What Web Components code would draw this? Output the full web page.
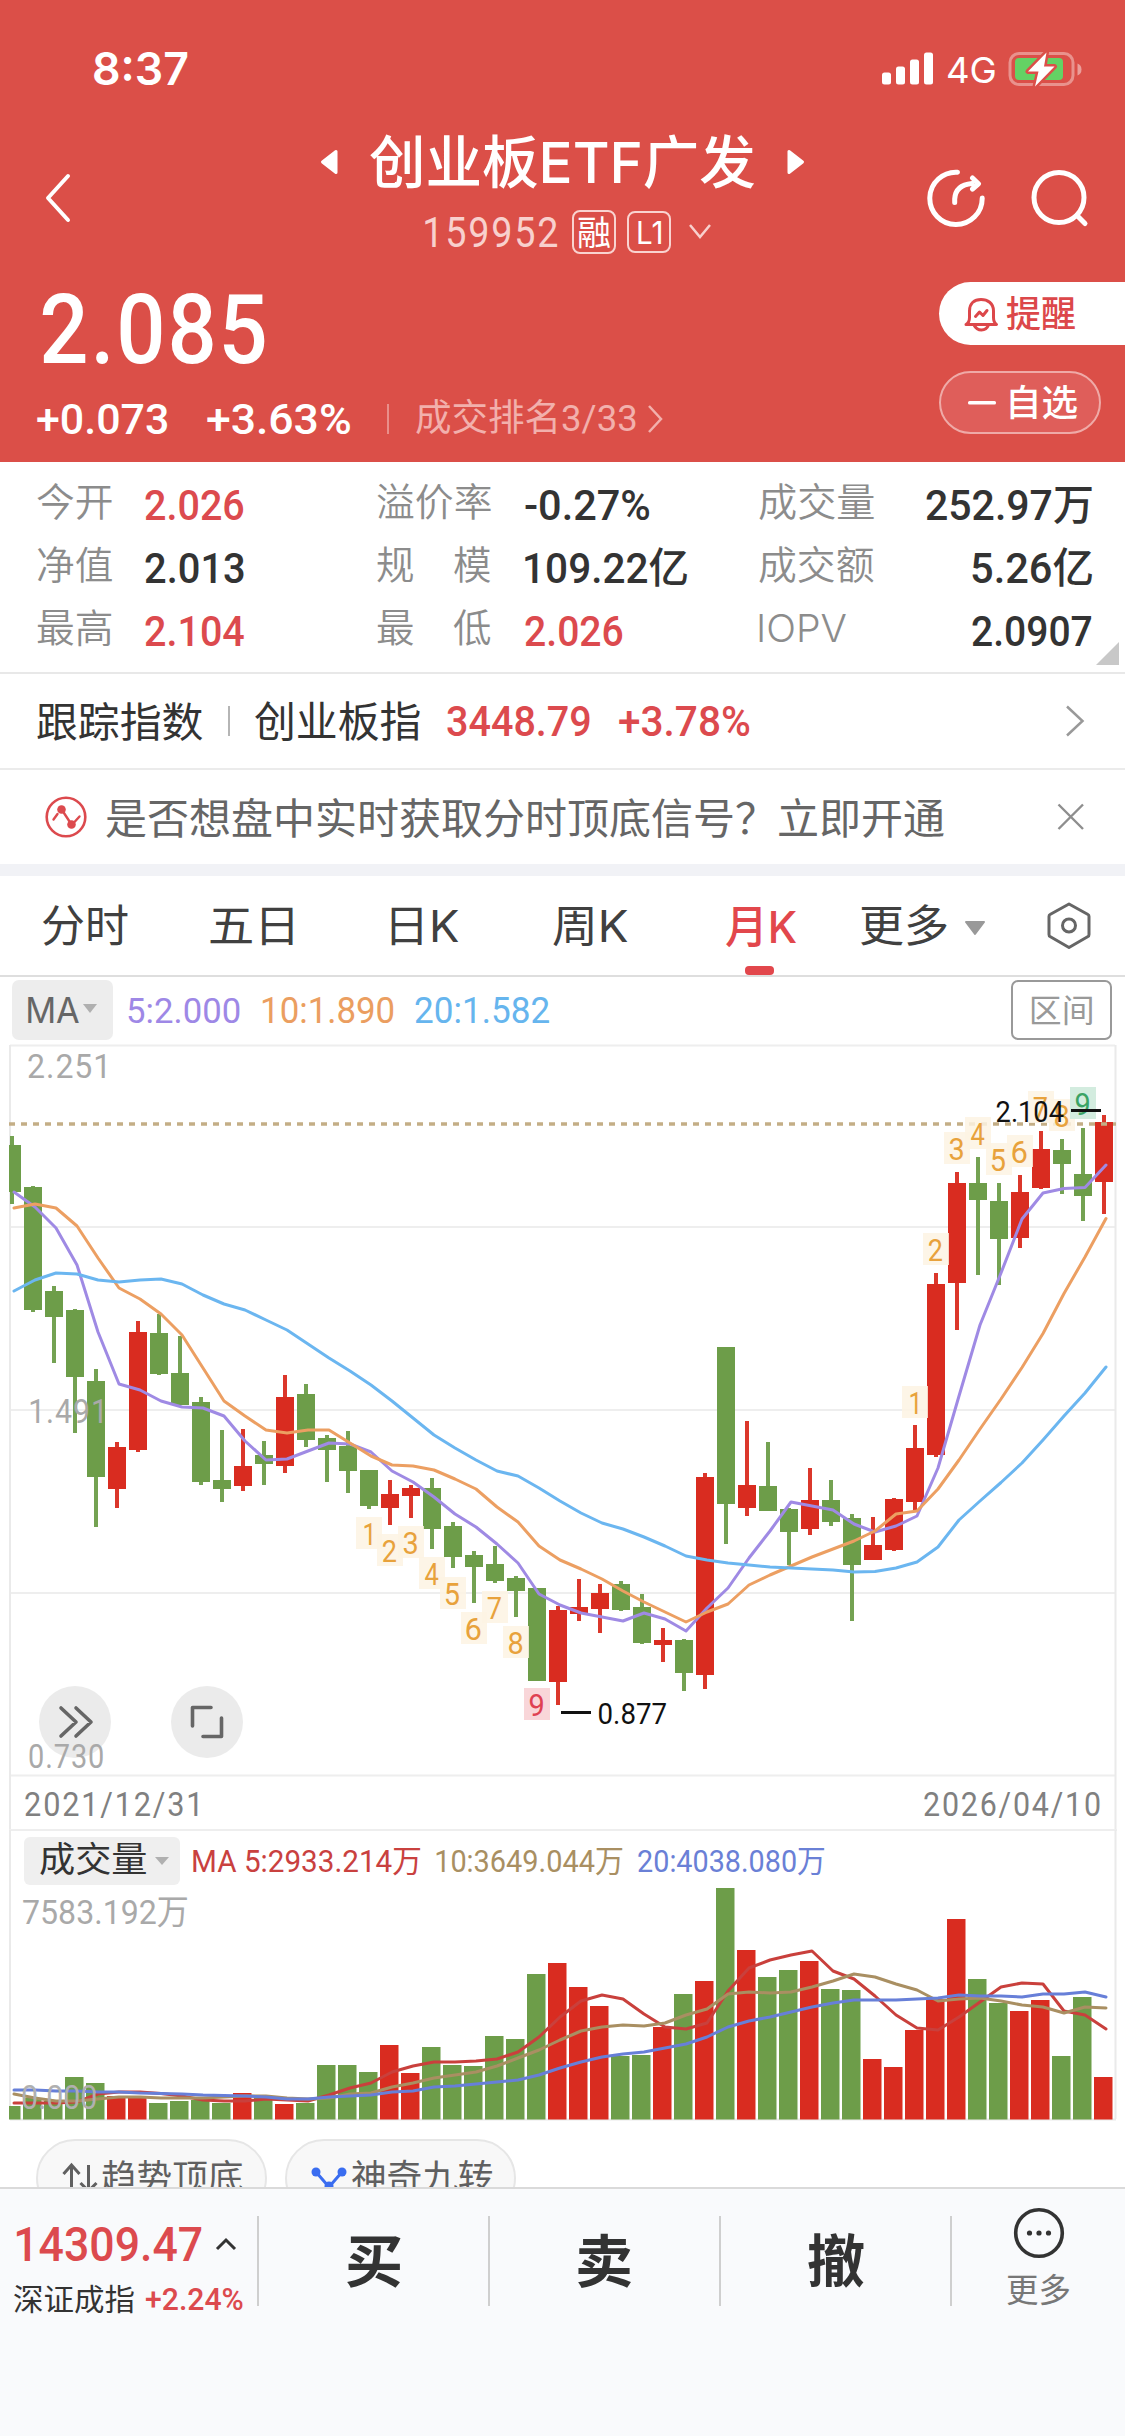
<!DOCTYPE html>
<html lang="zh-CN">
<head>
<meta charset="utf-8">
<title>创业板ETF广发</title>
<style>
html,body{margin:0;padding:0}
body{width:1125px;height:2436px;overflow:hidden;background:#fff;font-family:Roboto,"Noto Sans CJK SC",sans-serif;color:#333}
</style>
</head>
<body>
<fund-page></fund-page>
<script>
const NUM = 'Roboto, "Noto Sans CJK SC", sans-serif';
const UI = 'Inter, "Noto Sans CJK SC", sans-serif';
const pen = document.createElement('canvas').getContext('2d');

// Returns an SVG <text> whose ink starts at x and spans w pixels.
function fitted(str, o) {
  const fam = o.ui ? UI : NUM, wt = o.weight || 400;
  pen.font = `${wt} ${o.size}px ${fam}`;
  pen.letterSpacing = (o.ls || 0) + 'px';
  const m = pen.measureText(str);
  const left = -m.actualBoundingBoxLeft, ink = m.actualBoundingBoxRight - left;
  const s = o.w / ink;
  return `<text xml:space="preserve" transform="translate(${(o.x - left * s).toFixed(2)} ${o.y}) scale(${s.toFixed(4)} 1)" style="font:${wt} ${o.size}px ${fam.replace(/"/g, "'")};letter-spacing:${o.ls || 0}px;white-space:pre" fill="${o.fill || 'currentColor'}">${str}</text>`;
}

function define(name, html, after) {
  customElements.define(name, class extends HTMLElement {
    connectedCallback() {
      if (this.shadowRoot) return;
      const root = this.attachShadow({ mode: 'open' });
      const t = document.createElement('template');
      t.innerHTML = typeof html === 'function' ? html(this) : html;
      root.append(t.content.cloneNode(true));
      if (after) after(this, root);
    }
  });
}

define('ink-text', el => {
  const a = n => el.getAttribute(n);
  const str = a('t'), w = +a('w'), size = +a('s');
  const cjk = /^[\u3400-\u9fff]/.test(str);
  const H = Math.round(size * 1.2);
  const y = H / 2 + size * (cjk ? .375 : .357);
  return `<style>:host{display:block;flex:none;width:${w}px;height:${H}px}svg{display:block;overflow:visible}</style>
  <svg width="${w}" height="${H}">${fitted(str, { x: 0, y, w, size, weight: a('b') || 400, ui: el.hasAttribute('ui'), ls: +(a('ls') || 0) })}</svg>`;
});

define('status-bar', `<style>
:host{display:flex;align-items:center;height:138px;padding:0 43px 0 94px;color:#fff}
.r{margin-left:auto;display:flex;align-items:center}
svg{display:block}
</style>
<ink-text t="8:37" w="94" s="45" b="600" ui></ink-text>
<div class="r">
<svg width="52" height="34" viewBox="0 0 52 34" fill="#fff"><rect x="0" y="20.5" width="9" height="12" rx="2.5"/><rect x="14" y="14.5" width="9" height="18" rx="2.5"/><rect x="28" y="7.500" width="9" height="25" rx="2.500"/><rect x="42" y=".5" width="9" height="32" rx="2.500"/></svg>
<ink-text t="4G" w="47" s="36" ui style="margin:2px 0 0 14px"></ink-text>
<svg width="74" height="38" viewBox="0 0 74 38" style="margin-left:13px">
<rect x="2" y="3.500" width="63" height="31" rx="9" fill="none" stroke="#fff" stroke-opacity=".38" stroke-width="3"/>
<path d="M69.500 13.500q4 1.500 4 6t-4 6z" fill="#fff" fill-opacity=".45"/>
<rect x="7" y="8" width="48" height="22" rx="4" fill="#64d264"/>
<path d="M38.500 2.500L20 21.500h10.500L27 36.500L46.500 16.500H36z" fill="#fff" stroke="#db4f48" stroke-width="5" stroke-linejoin="round"/>
<path d="M38.500 2.500L20 21.500h10.500L27 36.500L46.500 16.500H36z" fill="#fff"/></svg>
</div>`);

define('fund-nav', `<style>
:host{display:flex;height:120px;color:#fff;justify-content:space-between}
svg{display:block;flex:none}
.side{display:flex;align-items:center;width:250px;box-sizing:border-box}
.mid{display:flex;flex-direction:column;align-items:center}
.title{height:47px;display:flex;align-items:center;gap:32px}
.code{height:46px;margin-top:24px;display:flex;align-items:center;margin-left:13px}
.tag{border:2px solid #f9d3d0;border-radius:8px;display:flex;align-items:center;justify-content:center;box-sizing:border-box}
</style>
<div class="side" style="padding-left:44px"><svg width="28" height="52"><path d="M24 4L4 26L24 48" fill="none" stroke="#fff" stroke-width="4" stroke-linecap="round" stroke-linejoin="round"/></svg></div>
<div class="mid">
<div class="title"><svg width="18" height="26"><path d="M16 2.500v21L2.500 13z" fill="#fff" stroke="#fff" stroke-width="3" stroke-linejoin="round"/></svg>
<ink-text t="创业板ETF广发" w="385" s="57" b="500" ui></ink-text>
<svg width="18" height="26"><path d="M2 2.500v21L15.500 13z" fill="#fff" stroke="#fff" stroke-width="3" stroke-linejoin="round"/></svg></div>
<div class="code"><ink-text t="159952" w="133" s="42" ls="2" style="color:#f8d0cd"></ink-text>
<div class="tag" style="width:44px;height:44px;margin-left:14px"><ink-text t="融" w="32" s="34"></ink-text></div>
<div class="tag" style="width:44px;height:42px;margin-left:11px"><ink-text t="L1" w="23" s="31" ui></ink-text></div>
<svg width="26" height="20" style="margin-left:16px"><path d="M3 3L13 15L23 3" fill="none" stroke="#f8d0cd" stroke-width="2.500"/></svg></div>
</div>
<div class="side" style="padding-left:52px">
<svg width="60" height="60" fill="none" stroke="#fff" stroke-width="5" stroke-linecap="round" stroke-linejoin="round"><path d="M30.500 4.200A26.200 26.200 0 1 0 55.200 30M27.700 34.500V31Q28.500 17 45 15.500M45.500 10L51.500 15.800L45.500 21"/></svg>
<svg width="62" height="62" style="margin:2px 0 0 41px" fill="none" stroke="#fff" stroke-width="5" stroke-linecap="round"><circle cx="31" cy="29.500" r="25"/><path d="M49 47.500L57 55.500"/></svg>
</div>`);

define('price-panel', `<style>
:host{display:flex;height:204px;color:#fff;justify-content:space-between}
svg{display:block;flex:none}
.l{padding-top:24px}
.price{height:95px;display:flex;align-items:center;padding-left:42px}
.chg{height:83px;display:flex;align-items:center;padding-left:37px}
.rank{color:#f2b0ac;display:flex;align-items:center}
.bar{width:2px;height:30px;background:#e98f8a;margin:0 27px 0 37px}
.r{width:186px;padding-top:24px}
.pill{height:63px;box-sizing:border-box;display:flex;align-items:center}
.remind{background:#fff;color:#dc474a;border-radius:32px 0 0 32px;padding-left:24px}
.self{width:162px;margin-top:26px;border:2px solid #efaaa7;border-radius:32px;background:#df5e5a;padding-left:27px}
</style>
<div class="l">
<div class="price"><ink-text t="2.085" w="223" s="97" b="500" ls="2" style="margin-top:-3px"></ink-text></div>
<div class="chg"><ink-text t="+0.073" w="131" s="43" b="500"></ink-text><ink-text t="+3.63%" w="143" s="43" b="500" style="margin-left:39px"></ink-text>
<span class="bar"></span><span class="rank"><ink-text t="成交排名3/33" w="220" s="37" style="margin-top:-3px"></ink-text><svg width="18" height="30" style="margin-left:10px"><path d="M3 2L15 15L3 28" fill="none" stroke="#f2b0ac" stroke-width="2.500"/></svg></span></div>
</div>
<div class="r">
<div class="pill remind"><svg width="36" height="38" fill="none" stroke="#dc474a" stroke-width="3" stroke-linejoin="round" stroke-linecap="round"><path d="M3 29.500q3.500-2 3.500-7V16C6.500 8 11.500 4.500 18 4.500S30.500 8 30.500 16v6.500q0 5 3 7zM11 30q2.500 5 7.500 5t7-5"/><path d="M12.500 21.500l4-4.500l3.500 3.500l4-5"/></svg><ink-text t="提醒" w="69" s="36" b="500" style="margin-left:7px"></ink-text></div>
<div class="pill self"><svg width="28" height="4"><rect width="28" height="3.500" rx="1.500" fill="#fff"/></svg><ink-text t="自选" w="67" s="36" b="500" style="margin-left:14px"></ink-text></div>
</div>`);

define('fund-header', `<style>:host{display:block;background:#db4f48;height:462px}</style>
<status-bar></status-bar><fund-nav></fund-nav><price-panel></price-panel>`);

define('stat-cell', el => {
  const a = n => el.getAttribute(n);
  return `<style>:host{display:flex;align-items:center;height:63px}
  .k{color:#8c8c8c;width:${a('gap')}px;flex:none;margin-top:-5px}.v{color:${el.hasAttribute('up') ? '#dc4a4e' : '#333'};${el.hasAttribute('end') ? 'margin-left:auto' : ''}}</style>
  <div class="k"><ink-text t="${a('k')}" w="${a('kw')}" s="${a('ks') || 38.5}" ${a('k') === 'IOPV' ? 'ui' : ''} b="${a('k') === 'IOPV' ? 300 : 350}"></ink-text></div><div class="v"><ink-text t="${a('v')}" w="${a('vw')}" s="42" b="500"></ink-text></div>`;
});

define('stat-grid', `<style>
:host{display:grid;grid-template-columns:340px 382px 333px;height:210px;box-sizing:border-box;padding:11px 32px 0 37px;border-bottom:2px solid #e8e8e8;position:relative;grid-auto-rows:63px}
.fold{position:absolute;right:6px;bottom:7px;display:block}
</style>
<stat-cell gap="108" k="今开" kw="75" v="2.026" vw="99" up></stat-cell><stat-cell gap="148" k="溢价率" kw="114" v="-0.27%" vw="125"></stat-cell><stat-cell gap="113" k="成交量" kw="115" v="252.97万" vw="166" end></stat-cell>
<stat-cell gap="108" k="净值" kw="75" v="2.013" vw="99"></stat-cell><stat-cell gap="148" k="规　模" kw="114" v="109.22亿" vw="162"></stat-cell><stat-cell gap="113" k="成交额" kw="115" v="5.26亿" vw="120" end></stat-cell>
<stat-cell gap="108" k="最高" kw="75" v="2.104" vw="99" up></stat-cell><stat-cell gap="148" k="最　低" kw="114" v="2.026" vw="98" up></stat-cell><stat-cell gap="113" k="IOPV" kw="87" ks="38.5" v="2.0907" vw="120" end></stat-cell>
<svg class="fold" width="23" height="23"><path d="M23 0V23H0z" fill="#c8c8c8"/></svg>`);

define('index-row', `<style>
:host{display:flex;align-items:center;height:98px;box-sizing:border-box;padding:0 40px 0 37px;border-bottom:2px solid #ebebeb}
.bar{width:2px;height:30px;background:#b5b5b5;margin:0 25px 0 25px}
.up{color:#dc4a4e;display:flex}svg{margin-left:auto;display:block}
</style>
<ink-text t="跟踪指数" w="166" s="41.5"></ink-text><span class="bar"></span><ink-text t="创业板指" w="165" s="41.5"></ink-text>
<span class="up" style="margin-left:27px"><ink-text t="3448.79" w="143" s="42" b="500"></ink-text><ink-text t="+3.78%" w="131" s="42" b="500" style="margin-left:29px"></ink-text></span>
<svg width="20" height="32"><path d="M2 1.500L17.500 16L2 30.500" fill="none" stroke="#999" stroke-width="2.500"/></svg>`);

define('signal-notice', `<style>
:host{display:flex;align-items:center;height:105px;box-sizing:border-box;padding:0 40px 0 45px;color:#666;border-bottom:12px solid #f1f2f6}
svg{display:block;flex:none}
</style>
<svg width="42" height="42"><circle cx="21" cy="21" r="19.300" fill="none" stroke="#dc4a4e" stroke-width="2.600"/><path d="M8.500 23.500L12.500 18M17 14L26.500 28.500M29.500 26L34.500 20.500" fill="none" stroke="#dc4a4e" stroke-width="2.400" stroke-linecap="round"/><circle cx="16.500" cy="13.500" r="4.300" fill="#dc4a4e"/><circle cx="26.500" cy="28.500" r="4.300" fill="#dc4a4e"/></svg>
<ink-text t="是否想盘中实时获取分时顶底信号？立即开通" w="838" s="42" style="margin:1px 0 0 19px"></ink-text>
<svg width="28" height="28" style="margin-left:auto"><path d="M1.500 1.500L26 26M26 1.500L1.500 26" stroke="#8e8e8e" stroke-width="2.400"/></svg>`);

define('period-tabs', `<style>
:host{display:flex;align-items:center;height:101px;box-sizing:border-box;padding:0 0 0 42px;border-bottom:2px solid #dedede;color:#404040}
svg{display:block;flex:none}
.on{color:#e2474c;display:flex;flex-direction:column;align-items:center;height:99px;box-sizing:border-box;padding-top:24px}
.on i{width:29px;height:9px;border-radius:4px;background:#e2474c;margin-top:auto;margin-left:-4px}
</style>
<ink-text t="分时" w="86" s="44"></ink-text><ink-text t="五日" w="83" s="44" style="margin-left:82px"></ink-text><ink-text t="日K" w="68" s="44" ui style="margin-left:98px"></ink-text><ink-text t="周K" w="75" s="44" ui style="margin-left:94px"></ink-text>
<div class="on" style="margin-left:98px"><ink-text t="月K" w="71" s="44" b="500" ui></ink-text><i></i></div>
<ink-text t="更多" w="86" s="44" style="margin-left:64px"></ink-text><svg width="22" height="16" style="margin-left:17px;margin-top:4px"><path d="M2 2h18l-9 12z" fill="#999" stroke="#999" stroke-width="2" stroke-linejoin="round"/></svg>
<svg width="46" height="50" style="margin-left:60px" fill="none" stroke="#666" stroke-width="3"><path d="M23 3L42 13.500Q43 14 43 15.500V33.500Q43 35 42 35.500L23 46.500L4 35.500Q3 35 3 33.500V15.500Q3 14 4 13.500z" stroke-linejoin="round"/><circle cx="23" cy="24.500" r="6.500"/></svg>`);

define('ma-legend', `<style>
:host{display:flex;align-items:center;height:68px;padding:0 13px 2px 12px;box-sizing:border-box}
.b{width:101px;height:60px;border-radius:7px;background:#ededed;display:flex;align-items:center;box-sizing:border-box;padding-left:16px;color:#666}
.z{margin-left:auto;width:101px;height:60px;border:2px solid #999;border-radius:7px;box-sizing:border-box;display:flex;align-items:center;justify-content:center;color:#999}
</style>
<div class="b"><ink-text t="MA" w="51" s="36" ui></ink-text><svg width="14" height="10" style="margin:-3px 0 0 4px"><path d="M0 0h14L7 9z" fill="#b0b0b0"/></svg></div>
<ink-text t="5:2.000" w="112" s="36" style="margin-left:15px;color:#9e88e6"></ink-text><ink-text t="10:1.890" w="131" s="36" style="margin-left:23px;color:#eb9e60"></ink-text><ink-text t="20:1.582" w="134" s="36" style="margin-left:21px;color:#66b5ee"></ink-text>
<div class="z"><ink-text t="区间" w="60" s="31.500"></ink-text></div>`);

// high, body top, body bottom, low (canvas y), r = rising month
const K = `1136 1145 1192 1204 g|1186 1187 1310 1312 g|1286 1291 1317 1363 g|1309 1310 1377 1433 g|1369 1381 1477 1527 g|1442 1447 1489 1508 r|1321 1332 1450 1452 r|1314 1333 1374 1375 g|1336 1373 1405 1405 g|1397 1402 1482 1485 g|1430 1480 1489 1502 g|1429 1466 1486 1491 r|1441 1455 1464 1485 g|1375 1397 1466 1473 r|1384 1394 1440 1447 g|1435 1438 1450 1482 g|1431 1446 1471 1493 g|1470 1470 1506 1509 g|1480 1494 1508 1525 r|1485 1488 1496 1518 r|1478 1488 1529 1549 g|1522 1526 1557 1568 g|1551 1555 1567 1603 g|1546 1564 1581 1583 g|1576 1578 1591 1617 g|1588 1588 1681 1681 g|1606 1610 1682 1705 r|1579 1607 1614 1621 r|1584 1593 1609 1633 r|1581 1584 1610 1611 g|1594 1607 1643 1644 g|1628 1640 1645 1662 r|1639 1640 1673 1691 g|1473 1477 1675 1689 r|1347 1347 1504 1544 g|1421 1485 1508 1516 r|1442 1486 1511 1511 g|1508 1509 1532 1565 g|1468 1500 1529 1535 r|1480 1500 1522 1526 g|1514 1518 1565 1621 g|1517 1545 1560 1560 r|1498 1499 1550 1551 r|1425 1448 1502 1510 r|1273 1284 1455 1457 r|1172 1183 1283 1330 r|1157 1183 1200 1275 g|1183 1201 1239 1285 g|1175 1192 1238 1248 r|1131 1149 1188 1189 r|1139 1150 1164 1194 g|1128 1174 1196 1221 g|1115 1122 1182 1214 r`.split('|').map(s => s.split(' ').map((v, i) => i < 4 ? +v : v));
const M5 = [1192,1207,1228,1265,1332,1384,1390,1401,1407,1408,1416,1441,1460,1459,1451,1443,1444,1452,1471,1482,1497,1514,1527,1544,1563,1594,1605,1613,1617,1621,1613,1619,1631,1608,1588,1558,1531,1502,1506,1510,1524,1532,1526,1516,1468,1396,1325,1273,1219,1193,1188.5,1187.5,1165];
const M10 = [1208,1204,1208,1226,1258,1288,1299,1314,1335,1368,1401,1416,1430,1433,1430,1430,1443,1456,1465,1466,1470,1479,1489,1507,1522,1546,1560,1569,1579,1591,1602,1612,1622,1612,1604,1585,1575,1566,1557,1549,1541,1531,1514,1511,1489,1460,1429,1399,1367.5,1333.5,1293.5,1257,1218.5];
const M20 = [1291,1280,1273,1274,1280,1282,1280,1279,1284,1295,1304,1310,1320,1330,1344,1358,1371,1385,1401,1418,1435,1448,1460,1471,1476,1488,1501,1513,1523,1529,1537,1546,1556,1560,1563,1565,1567,1568,1569,1570,1572,1571.5,1568,1562,1547,1520,1501,1482.5,1463,1440,1416,1393,1367];
const V = [2106,2098,2101,2077,2083,2096,2097,2103,2101,2100,2103,2093,2096,2104,2103,2065,2065,2072,2045,2073,2047,2065,2066,2036,2039,1974,1963,1987,2006,2056,2055,2027,1994,1981,1888,1950,1977,1970,1961,1989,1990,2059,2067,2030,1999,1919,1979,2003,2011,2000,2056,1997,2077];
const V5 = [2103,2103,2103,2102,2094,2092,2092,2093.5,2096,2100,2101,2101,2099,2100,2101,2095,2088,2083,2072,2066,2062,2062,2061,2059,2052,2037,2017,2001,1995,1999,2014,2027,2029,2023,1991,1968,1960,1955,1951,1971,1979,1996,2015,2028,2030,2017,2002,1987,1983,1984,2011,2015,2029];
const V10 = [2094,2098,2101,2101,2099,2097,2097,2098,2098,2098,2097,2096,2096,2098,2099,2098,2094,2093,2087,2083,2078,2075,2072,2066,2058,2050,2040,2031,2027,2025,2026,2023,2015,2009,1994,1992,1993,1992,1987,1981,1974,1977,1984,1990,2001,1999,1998,2001,2005,2007,2013,2007,2008];
const V20 = [2090,2090,2091,2091,2092,2092,2093,2093.5,2094,2095,2095.5,2096,2097,2099,2099,2097,2096,2095,2092,2091,2087,2086,2084,2082,2080,2075,2068,2062,2057,2054,2052,2048,2044,2037,2027,2021,2017,2012,2007,2003,2000,2000,2000,1999,1998,1995,1996,1996,1997,1994,1994,1992,1997];
const X = i => 12 + 21 * i, RED = '#d92c20', GREEN = '#6d9d49';
const line = (a, c, w = 3) => `<polyline fill="none" stroke="${c}" stroke-width="${w}" stroke-linejoin="round" stroke-linecap="round" points="${a.map((y, i) => `${X(i) + 2},${y}`).join(' ')}"/>`;

define('kline-chart', () => {
  let s = '';
  for (const y of [1045.5, 1227, 1410, 1593, 1775.500]) s += `<path d="M10 ${y}H1115" stroke="#eee" stroke-width="2"/>`;
  s += '<path d="M10 1045V1830M1115.500 1045V1830" stroke="#eaeaea" stroke-width="2"/>';
  s += '<circle cx="75" cy="1722" r="36" fill="#ebebeb"/><circle cx="207" cy="1722" r="36" fill="#ebebeb"/><g fill="none" stroke="#666" stroke-width="3.600" stroke-linecap="round" stroke-linejoin="round"><path d="M61 1708L76 1722L61 1736M76 1708L91 1722L76 1736M192.500 1726V1707.500H211M221.500 1718V1736.500H203"/></g>';
  K.forEach(([h, t, b, l, c], i) => {
    const f = c === 'r' ? RED : GREEN, x0 = Math.max(9, X(i) - 9);
    s += `<rect x="${X(i) - 2}" y="${h}" width="4" height="${l - h}" fill="${f}" fill-opacity=".95"/><rect x="${x0}" y="${t}" width="${X(i) + 9 - x0}" height="${b - t}" fill="${f}"/>`;
  });
  s += '<path d="M9 1124H1116" stroke="#c4ae86" stroke-width="3.500" stroke-dasharray="6 6"/>';
  s += line(M5, '#9f8ae4') + line(M10, '#ec9f62') + line(M20, '#6bb6f0');
  const tag = (n, i, y, c = '#e8a23c', bg = '#fdf3e3', op = .85) => `<rect x="${X(i) - 13}" y="${y - 17}" width="26" height="32" fill="${bg}" fill-opacity="${op}"/>` + fitted(n, { x: X(i) - (n === '1' ? 5 : 7.500), y: y + 10.500, w: n === '1' ? 8 : 14, size: 31, fill: c });
  [[1, 17, 1534], [2, 18, 1551], [3, 19, 1543], [4, 20, 1574], [5, 21, 1594], [6, 22, 1629], [7, 23, 1608], [8, 24, 1643],
   [1, 43, 1403], [2, 44, 1250], [3, 45, 1149], [4, 46, 1134], [5, 47, 1160], [6, 48, 1152], [7, 49, 1108], [8, 50, 1116]].forEach(([n, i, y]) => s += tag(String(n), i, y));
  s += tag('9', 25, 1705, '#df4152', '#f9d6d9', 1) + tag('9', 51, 1104, '#3ba364', '#d3ecdf', 1);
  s += '<path d="M561 1712.500H591M1071 1110.500H1101" stroke="#111" stroke-width="3"/>';
  s += fitted('0.877', { x: 598.500, y: 1724, w: 68, size: 29.5, fill: '#111' }) + fitted('2.104', { x: 996.500, y: 1122, w: 67, size: 29.5, fill: '#111' });
  const g = '#a9a9a9';
  s += fitted('2.251', { x: 28, y: 1078, w: 77, size: 33, fill: g, ls: 1 }) + fitted('1.491', { x: 30, y: 1423, w: 72, size: 33, fill: g, ls: 1 }) + fitted('0.730', { x: 29, y: 1768, w: 74, size: 33, fill: g, ls: 1 });
  return `<style>:host{display:block;height:731px}svg{display:block;overflow:visible}</style><svg width="1125" height="731" viewBox="0 1045 1125 731">${s}</svg>`;
});

define('date-axis', `<style>:host{display:flex;justify-content:space-between;align-items:center;height:55px;box-sizing:border-box;margin:0 8.500px 0 9px;padding:2px 17px 0 16px;border-bottom:2px solid #eee;color:#808080}</style>
<ink-text t="2021/12/31" w="173" s="34" ls="2"></ink-text><ink-text t="2026/04/10" w="176" s="34" ls="2"></ink-text>`);

define('volume-legend', `<style>:host{display:flex;align-items:center;height:59px;padding:0 0 0 24px;box-sizing:border-box}
.b{width:156px;height:48px;border-radius:6px;background:#efefef;display:flex;align-items:center;box-sizing:border-box;padding-left:16px}</style>
<div class="b"><ink-text t="成交量" w="106" s="35.500" style="margin-top:-4px"></ink-text><svg width="14" height="9" style="margin:2px 0 0 9px"><path d="M0 0h14L7 8z" fill="#b0b0b0"/></svg></div>
<ink-text t="MA 5:2933.214万" w="228" s="31" style="margin-left:13px;color:#c9413f"></ink-text><ink-text t="10:3649.044万" w="187" s="31" style="margin-left:15px;color:#a98f62"></ink-text><ink-text t="20:4038.080万" w="187" s="31" style="margin-left:15px;color:#6a80d6"></ink-text>`);

define('volume-chart', () => {
  let s = '<path d="M10 1830V2119M1115.500 1830V2119M10 2119.500H1116" stroke="#eaeaea" stroke-width="2" fill="none"/>';
  V.forEach((y, i) => { const x0 = Math.max(9, X(i) - 10); s += `<rect x="${x0}" y="${y}" width="${X(i) + 8.500 - x0}" height="${2119.500 - y}" fill="${K[i][4] === 'r' ? RED : GREEN}"/>`; });
  s += line(V5, '#c9403c') + line(V10, '#a98f62') + line(V20, '#677fd8');
  s += fitted('7583.192万', { x: 23, y: 1924, w: 164, size: 34, fill: '#a9a9a9' }) + fitted('0.000', { x: 22, y: 2109, w: 74, size: 33, fill: '#b0b0b0' });
  return `<style>:host{display:block;height:230px}svg{display:block;overflow:visible}</style><svg width="1125" height="230" viewBox="0 1890 1125 230">${s}</svg>`;
});

define('tool-chip', el => `<style>:host{display:flex;align-items:center;width:${el.getAttribute('w')}px;height:78px;box-sizing:border-box;border:2px solid #e6e6e6;border-radius:39px;background:#f8f8f8;color:#606060;padding-left:24px}</style><slot></slot><ink-text t="${el.getAttribute('t')}" w="141" s="35.500" style="margin:-3px 0 0 ${el.getAttribute('g')}px"></ink-text>`);

define('chip-row', `<style>:host{display:flex;gap:18px;height:67px;overflow:hidden;box-sizing:border-box;padding:19px 0 0 36px}svg{display:block}</style>
<tool-chip w="231" t="趋势顶底" g="4"><svg width="36" height="36" fill="none" stroke="#606060" stroke-width="3"><path d="M9.500 32V5M1.500 14L9.500 5L17.500 14M26.500 5V31M18.500 23L26.500 31L34.500 23"/></svg></tool-chip>
<tool-chip w="231" t="神奇九转" g="5"><svg width="36" height="36"><path d="M5 12L18 27L31 12" fill="none" stroke="#3a6df0" stroke-width="3"/><g fill="#3a6df0"><circle cx="5" cy="12" r="4.500"/><circle cx="31" cy="12" r="4.500"/><circle cx="18" cy="26" r="4.500"/></g></svg></tool-chip>`);

define('trade-bar', `<style>
:host{display:flex;height:249px;box-sizing:border-box;border-top:2px solid #dadada;background:#f9fafc;color:#333}
.idx{width:257px;padding-left:14px;box-sizing:border-box}
.row{display:flex;align-items:center}
.up{color:#dc4a4e}
.act{width:231px;height:90px;margin-top:27px;border-left:2px solid #cfcfcf;display:flex;align-items:center;justify-content:center;box-sizing:border-box}
.more{height:90px;margin-top:27px;border-left:2px solid #cfcfcf;flex:1;color:#777;display:flex;flex-direction:column;align-items:center}
svg{display:block;flex:none}
</style>
<div class="idx"><div class="row" style="margin-top:26px;padding-left:2px"><ink-text t="14309.47" w="186" s="48" b="500" class="up"></ink-text><svg width="22" height="14" style="margin-left:13px"><path d="M2 12L11 3L20 12" fill="none" stroke="#333" stroke-width="3"/></svg></div>
<div class="row" style="margin-top:7px"><ink-text t="深证成指" w="120" s="30"></ink-text><ink-text t="+2.24%" w="97" s="31" b="500" class="up" style="margin-left:12px"></ink-text></div></div>
<div class="act"><ink-text t="买" w="54" s="57" b="700"></ink-text></div><div class="act"><ink-text t="卖" w="53" s="57" b="700"></ink-text></div><div class="act"><ink-text t="撤" w="56" s="57" b="700"></ink-text></div>
<div class="more"><svg width="52" height="52" style="margin-top:-9px"><circle cx="26" cy="26" r="23.300" fill="none" stroke="#333" stroke-width="3.600"/><g fill="#333"><circle cx="16.500" cy="26" r="2.600"/><circle cx="26" cy="26" r="2.600"/><circle cx="35.500" cy="26" r="2.600"/></g></svg><ink-text t="更多" w="63" s="33" style="margin-top:11px"></ink-text></div>`);

define('fund-page', `<style>:host{display:flex;flex-direction:column;width:1125px;height:2436px;background:#fff;overflow:hidden}
fund-header,stat-grid,index-row,signal-notice,period-tabs,ma-legend,kline-chart,date-axis,volume-legend,volume-chart,chip-row,trade-bar{flex:none}</style>
<fund-header></fund-header><stat-grid style="height:212px"></stat-grid><index-row style="height:96px"></index-row><signal-notice style="height:106px"></signal-notice><period-tabs></period-tabs><ma-legend></ma-legend><kline-chart></kline-chart><date-axis></date-axis><volume-legend></volume-legend><volume-chart></volume-chart><chip-row></chip-row><trade-bar></trade-bar>`);
</script>
</body>
</html>
